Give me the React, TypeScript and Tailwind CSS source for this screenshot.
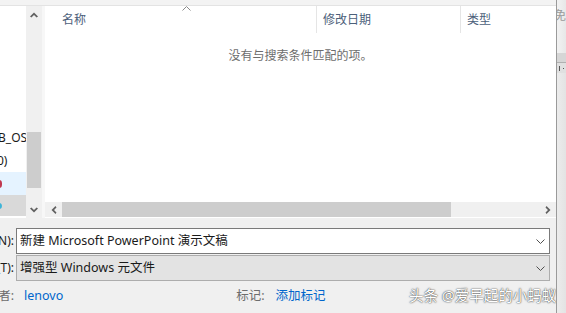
import React from 'react'

const font = "font-['Noto_Sans','Noto_Sans_CJK_SC',sans-serif]"

function ChevronUpFilled() {
  return (
    <svg width="8" height="6" viewBox="0 0 8 6">
      <path d="M0 4.5 L4 0.5 L8 4.5 L6.6 5.5 L4 3 L1.4 5.5 Z" fill="#606060" />
    </svg>
  )
}

function ChevronDownFilled() {
  return (
    <svg width="8" height="6" viewBox="0 0 8 6">
      <path d="M0 1.5 L4 5.5 L8 1.5 L6.6 0.5 L4 3 L1.4 0.5 Z" fill="#606060" />
    </svg>
  )
}

function ChevronLeftFilled() {
  return (
    <svg width="6" height="8" viewBox="0 0 6 8">
      <path d="M4.5 0 L0.5 4 L4.5 8 L5.5 6.6 L3 4 L5.5 1.4 Z" fill="#606060" />
    </svg>
  )
}

function ChevronRightFilled() {
  return (
    <svg width="6" height="8" viewBox="0 0 6 8">
      <path d="M1.5 0 L5.5 4 L1.5 8 L0.5 6.6 L3 4 L0.5 1.4 Z" fill="#606060" />
    </svg>
  )
}

function ComboArrow() {
  return (
    <svg width="9" height="5" viewBox="0 0 9 5">
      <path d="M0.5 0.5 L4.5 4.5 L8.5 0.5" fill="none" stroke="#505050" strokeWidth="1" />
    </svg>
  )
}

function Label({ text }: { text: string }) {
  return (
    <div className="w-[14px] shrink-0 overflow-hidden flex justify-end whitespace-nowrap text-[#1a1a1a]">
      <span className="shrink-0">{text}</span>
    </div>
  )
}

export default function App() {
  return (
    <div className={`w-[566px] h-[313px] flex overflow-hidden text-[12px] leading-none ${font}`}>
      {/* Dialog */}
      <div className="relative w-[556px] shrink-0 bg-[#f0f0f0] flex flex-col overflow-hidden">
        {/* top strip */}
        <div className="h-[6px] bg-[#f3f3f3] border-b border-[#e3e3e3]" />

        {/* browser area */}
        <div className="h-[212px] flex">
          {/* nav pane */}
          <div className="w-[26px] bg-white flex flex-col pt-[120px] text-[#1a1a1a]">
            <div className="h-[23px] flex items-center overflow-hidden whitespace-nowrap">
              <span className="ml-[-2px]">B_OS</span>
            </div>
            <div className="h-[23px] flex items-center overflow-hidden whitespace-nowrap">
              <span className="ml-[-3px]">0)</span>
            </div>
            <div className="h-[23px] bg-[#e5f3ff] flex items-center overflow-hidden">
              <div className="ml-[-4px] w-[6px] h-[8px] bg-[#c0384f] rounded-sm" />
            </div>
            <div className="h-[21px] bg-[#d9d9d9] flex items-center overflow-hidden">
              <div className="ml-[-4px] w-[6px] h-[6px] bg-[#3db4d8] rounded-sm" />
            </div>
          </div>

          {/* nav scrollbar */}
          <div className="w-[16px] bg-[#f0f0f0] flex flex-col">
            <div className="h-[17px] flex items-center justify-center">
              <ChevronUpFilled />
            </div>
            <div className="flex-1 flex flex-col pt-[109px] pb-[13px]">
              <div className="flex-1 mx-[1px] bg-[#cdcdcd]" />
            </div>
            <div className="h-[17px] flex items-center justify-center">
              <ChevronDownFilled />
            </div>
          </div>

          <div className="w-[3px] bg-[#f7f7f7]" />

          {/* file list */}
          <div className="flex-1 bg-white flex flex-col">
            <div className="h-[27px] flex text-[#4c607a]">
              <div className="relative w-[272px] flex items-center pl-[17px] border-r border-[#e5e5e5]">
                名称
                <svg className="absolute left-[137px] top-[0px]" width="9" height="5" viewBox="0 0 9 5">
                  <path d="M0.5 4.5 L4.5 0.5 L8.5 4.5" fill="none" stroke="#8a8a8a" strokeWidth="1" />
                </svg>
              </div>
              <div className="w-[144px] flex items-center pl-[6px] border-r border-[#e5e5e5]">修改日期</div>
              <div className="flex-1 flex items-center pl-[6px]">类型</div>
            </div>
            <div className="flex-1 flex justify-center pt-[17px] text-[#6d6d6d]">
              没有与搜索条件匹配的项。
            </div>
            {/* horizontal scrollbar */}
            <div className="h-[15px] mb-[1px] bg-[#f0f0f0] flex items-stretch">
              <div className="w-[17px] flex items-center justify-center">
                <ChevronLeftFilled />
              </div>
              <div className="flex-1 flex">
                <div className="w-[389px] bg-[#cdcdcd]" />
              </div>
              <div className="w-[17px] flex items-center justify-center">
                <ChevronRightFilled />
              </div>
            </div>
          </div>
        </div>

        {/* bottom form */}
        <div className="flex flex-col pt-[10px] pr-[6px]">
          <div className="flex items-center gap-[2px]">
            <Label text="文件名(N):" />
            <div className="flex-1 h-[26px] bg-white border border-[#7a7a7a] flex items-center pl-[3px] pr-[4px] text-[#1a1a1a] text-[12.5px]">
              <span className="flex-1">新建 Microsoft PowerPoint 演示文稿</span>
              <ComboArrow />
            </div>
          </div>
          <div className="flex items-center gap-[2px] mt-[1px]">
            <Label text="保存类型(T):" />
            <div className="flex-1 h-[26px] bg-[#e3e3e3] border border-[#adadad] flex items-center pl-[3px] pr-[4px] text-[#1a1a1a] text-[12.5px]">
              <span className="flex-1">增强型 Windows 元文件</span>
              <ComboArrow />
            </div>
          </div>
          <div className="flex items-center h-[30px] text-[12.5px]">
            <div className="w-[14px] shrink-0 overflow-hidden flex justify-end whitespace-nowrap text-[#6d6d6d]">
              <span className="shrink-0">作者:</span>
            </div>
            <span className="ml-[10px] text-[#0066cc]">lenovo</span>
            <span className="ml-[173px] text-[#6d6d6d]">标记:</span>
            <span className="ml-[11px] text-[#0066cc]">添加标记</span>
          </div>
        </div>

        {/* watermark */}
        <div className="absolute left-[409px] top-[288px] whitespace-nowrap text-[14.5px] text-white [text-shadow:0_0_1px_rgba(0,0,0,0.7),0_0_2px_rgba(0,0,0,0.6)]">
          头条 @爱早起的小蚂蚁
        </div>
      </div>

      {/* background window edge */}
      <div className="flex-1 border-l border-[#9a9a9a] bg-[#e6e6e6] flex flex-col">
        <div className="h-[53px] bg-gradient-to-r from-[#f2f2f2] to-[#dadada] overflow-hidden whitespace-nowrap pt-[10px] text-[#9a9a9a]">
          <span className="ml-[-3px]">免力</span>
        </div>
        <div className="h-[10px] bg-[#d6d6d6] border-b border-[#b0b0b0]" />
        <div className="h-[10px] bg-[#e0e0e0] flex items-center gap-[3px] pl-[2px]">
          <div className="w-[1px] h-[5px] bg-[#555]" />
          <div className="w-[1px] h-[1px] bg-[#555]" />
        </div>
        <div className="flex-1 bg-gradient-to-r from-[#ececec] to-[#d8d8d8]" />
      </div>
    </div>
  )
}
